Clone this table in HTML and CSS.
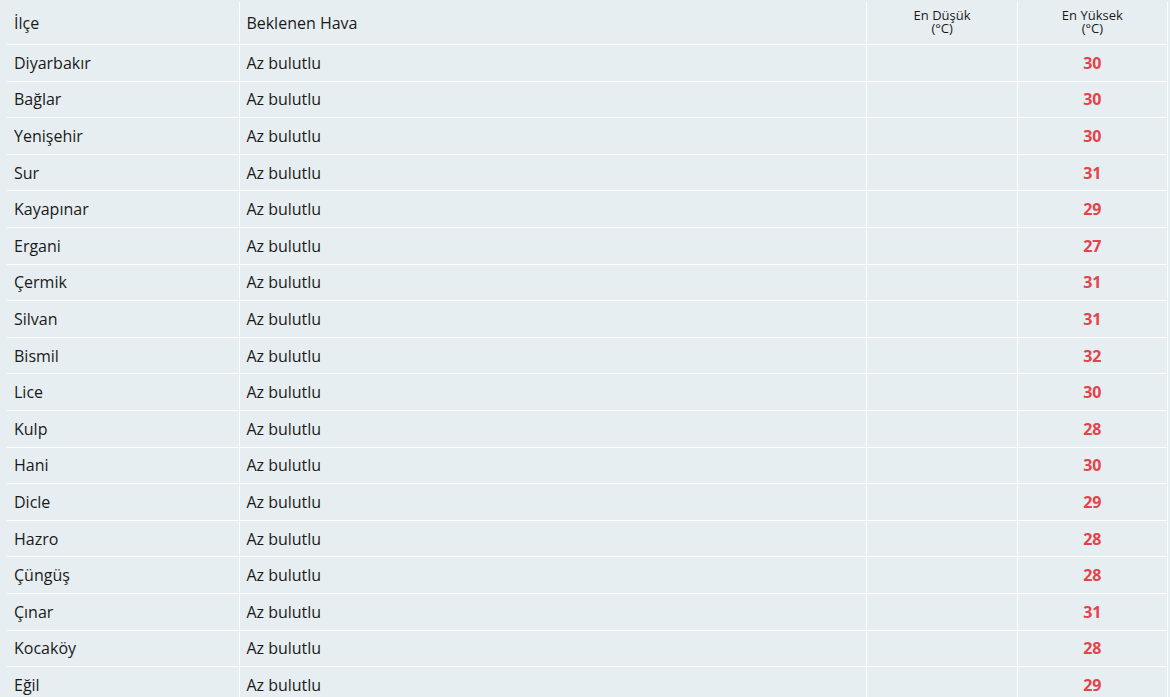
FILE: index.html
```html
<!DOCTYPE html>
<html lang="tr">

<head>
  <meta charset="UTF-8">
  <meta name="viewport" content="width=device-width, initial-scale=1.0">
  <title>Diyarbakır Hava Durumu</title>
  <link rel="stylesheet" href="styles.css">
</head>

<body>
  <table class="weather-table">
    <thead>
      <tr>
        <th class="col-district">İlçe</th>
        <th class="col-desc">Beklenen Hava</th>
        <th class="col-temp small">En Düşük<br>(°C)</th>
        <th class="col-temp small">En Yüksek<br>(°C)</th>
      </tr>
    </thead>
    <tbody>
      <tr><td>Diyarbakır</td><td>Az bulutlu</td><td></td><td class="max">30</td></tr>
      <tr><td>Bağlar</td><td>Az bulutlu</td><td></td><td class="max">30</td></tr>
      <tr><td>Yenişehir</td><td>Az bulutlu</td><td></td><td class="max">30</td></tr>
      <tr><td>Sur</td><td>Az bulutlu</td><td></td><td class="max">31</td></tr>
      <tr><td>Kayapınar</td><td>Az bulutlu</td><td></td><td class="max">29</td></tr>
      <tr><td>Ergani</td><td>Az bulutlu</td><td></td><td class="max">27</td></tr>
      <tr><td>Çermik</td><td>Az bulutlu</td><td></td><td class="max">31</td></tr>
      <tr><td>Silvan</td><td>Az bulutlu</td><td></td><td class="max">31</td></tr>
      <tr><td>Bismil</td><td>Az bulutlu</td><td></td><td class="max">32</td></tr>
      <tr><td>Lice</td><td>Az bulutlu</td><td></td><td class="max">30</td></tr>
      <tr><td>Kulp</td><td>Az bulutlu</td><td></td><td class="max">28</td></tr>
      <tr><td>Hani</td><td>Az bulutlu</td><td></td><td class="max">30</td></tr>
      <tr><td>Dicle</td><td>Az bulutlu</td><td></td><td class="max">29</td></tr>
      <tr><td>Hazro</td><td>Az bulutlu</td><td></td><td class="max">28</td></tr>
      <tr><td>Çüngüş</td><td>Az bulutlu</td><td></td><td class="max">28</td></tr>
      <tr><td>Çınar</td><td>Az bulutlu</td><td></td><td class="max">31</td></tr>
      <tr><td>Kocaköy</td><td>Az bulutlu</td><td></td><td class="max">28</td></tr>
      <tr><td>Eğil</td><td>Az bulutlu</td><td></td><td class="max">29</td></tr>
    </tbody>
  </table>
</body>

</html>
```

FILE: styles.css
```css
body {
  margin: 0;
  padding: 2px 0 0 7px;
  background: #e7eef1;
  font-family: "Open Sans", Arial, sans-serif;
  color: #1a1a1a;
  overflow: hidden;
}

.weather-table {
  width: 1161px;
  border-collapse: separate;
  border-spacing: 0;
  table-layout: fixed;
}

.weather-table th,
.weather-table td {
  border-right: 1px solid #fff;
  border-bottom: 1px solid #fff;
  padding: 0 7px;
  vertical-align: middle;
  font-size: 16px;
}

.weather-table th {
  height: 43px;
  box-sizing: border-box;
  font-weight: normal;
  text-align: left;
}

.weather-table td {
  height: 36.6px;
  box-sizing: border-box;
}

.weather-table td:nth-child(2),
.weather-table th:nth-child(2) {
  padding-left: 6px;
}

.col-district {
  width: 233px;
}

.col-desc {
  width: 626px;
}

.col-temp {
  width: 150px;
}

.weather-table th.small {
  font-size: 13px;
  line-height: 13px;
  text-align: center;
  padding-bottom: 3px;
}

.max {
  text-align: center;
  font-weight: bold;
  color: #e3434b;
}
```
